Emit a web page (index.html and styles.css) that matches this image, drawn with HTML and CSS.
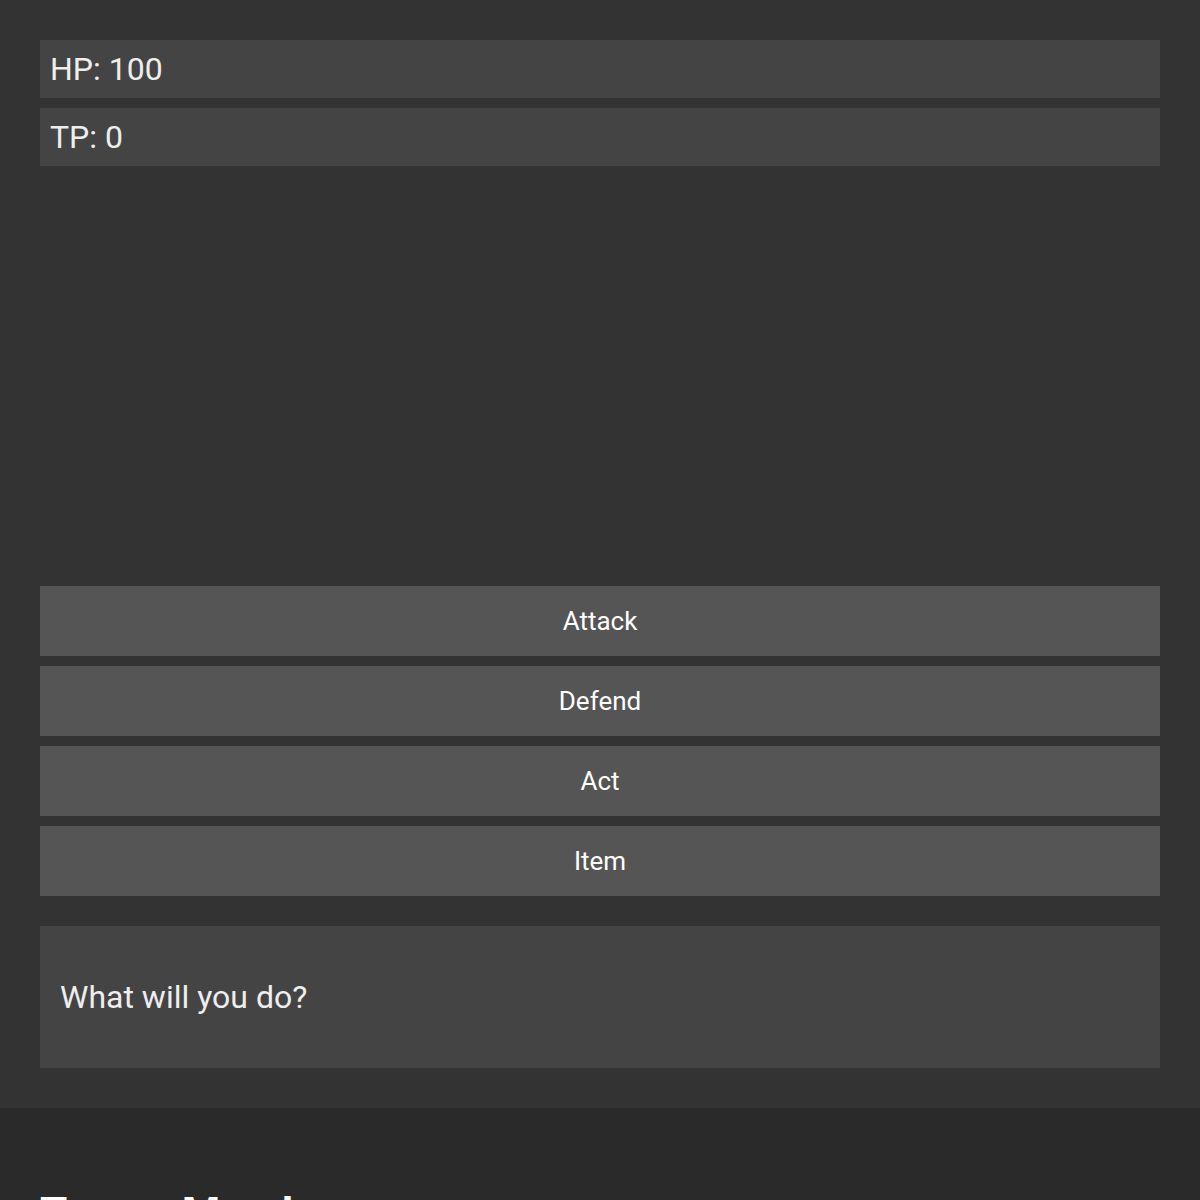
FILE: index.html
```html
<!DOCTYPE html>
<html>
<head>
<meta charset="utf-8">
<link rel="stylesheet" href="styles.css">
</head>
<body>
<main class="game">
  <div class="stat">HP: 100</div>
  <div class="stat">TP: 0</div>
  <div class="arena"></div>
  <div class="actions">
    <button class="action">Attack</button>
    <button class="action">Defend</button>
    <button class="action">Act</button>
    <button class="action">Item</button>
  </div>
  <div class="message">What will you do?</div>
</main>
<section class="team">
  <h2 class="team-title">Team Members</h2>
</section>
</body>
</html>
```
FILE: styles.css
```css
html, body {
  margin: 0;
  padding: 0;
}
body {
  background: #2a2a2a;
  color: #eeeeee;
  font-family: Roboto, "Noto Sans", sans-serif;
}
.game {
  background: #333333;
  padding: 40px;
  display: flex;
  flex-direction: column;
}
.stat {
  background: #444444;
  font-size: 32px;
  line-height: 38px;
  padding: 10px;
  margin-bottom: 10px;
}
.arena {
  height: 400px;
  margin-bottom: 10px;
}
.actions {
  display: flex;
  flex-direction: column;
  gap: 10px;
}
.action {
  height: 70px;
  background: #555555;
  border: none;
  color: #ffffff;
  font-family: Roboto, "Noto Sans", sans-serif;
  font-size: 26px;
  padding: 0;
}
.message {
  margin-top: 30px;
  background: #444444;
  height: 142px;
  box-sizing: border-box;
  padding: 0 20px;
  display: flex;
  align-items: center;
  font-size: 32px;
}
.team {
  padding: 40px;
}
.team-title {
  margin: 40px 0 0;
  font-size: 44px;
  font-weight: bold;
  color: #ffffff;
  word-spacing: 20px;
}
```
